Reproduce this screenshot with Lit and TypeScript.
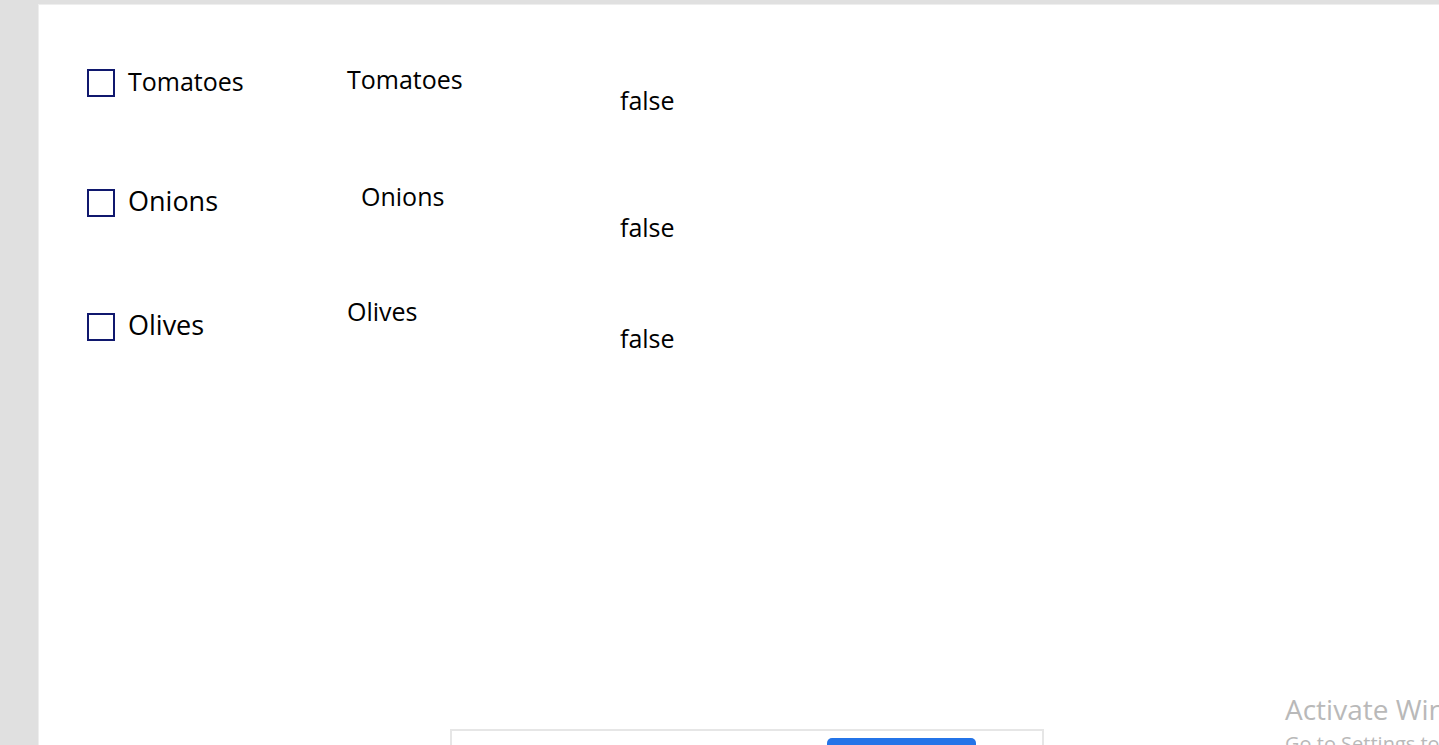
import { LitElement, html, css } from "lit";
import { customElement, state } from "lit/decorators.js";

@customElement("app-root")
class AppRoot extends LitElement {
  static styles = css`
    :host {
      display: block;
      color: #000;
      font-family: "Open Sans", "Noto Sans", sans-serif;
    }
    .workspace {
      box-sizing: border-box;
      position: relative;
      height: 100vh;
      overflow: hidden;
      padding: 4px 0 0 38px;
      background: #e0e0e0;
    }
    .screen {
      box-sizing: border-box;
      display: flex;
      align-items: flex-start;
      height: 100%;
      padding-left: 48px;
      border: solid #eee;
      border-width: 1px 0 0 1px;
      background: #fff;
    }
    .column {
      display: grid;
      line-height: 36px;
      font-size: 25px;
    }
    .choices {
      width: 260px;
      padding-top: 60px;
      grid-template-rows: 120px 124px 36px;
      font-size: 27px;
    }
    .names {
      width: 273px;
      padding-top: 56px;
      grid-template-rows: 117px 115px 36px;
    }
    .values {
      padding-top: 77px;
      grid-template-rows: 127px 111px 36px;
    }
    .small {
      font-size: 25px;
    }
    .indent {
      padding-left: 14px;
    }
    .choice {
      display: flex;
      align-items: center;
      gap: 13px;
      height: 36px;
    }
    .caption {
      padding-bottom: 4px;
    }
    .box {
      appearance: none;
      box-sizing: border-box;
      width: 28px;
      height: 28px;
      margin: 0;
      border: 2px solid #10186e;
      background: #fff;
    }
    .box:checked {
      box-shadow: inset 0 0 0 5px #fff;
      background: #10186e;
    }
    .sharing {
      position: absolute;
      left: 450px;
      right: 395px;
      bottom: 0;
      box-sizing: border-box;
      display: flex;
      justify-content: flex-end;
      height: 16px;
      padding: 7px 66px 0 0;
      border: 2px solid #e6e6e6;
      border-bottom: 0;
      background: #fff;
      overflow: hidden;
    }
    .stop {
      flex: none;
      width: 149px;
      height: 32px;
      padding: 0;
      border: 0;
      border-radius: 5px;
      background: #2374e8;
    }
    .watermark {
      position: absolute;
      left: calc(100% - 154px);
      bottom: -16px;
      color: #b9b9b9;
      white-space: nowrap;
    }
    .title {
      font-size: 28px;
      line-height: 36px;
    }
    .hint {
      font-size: 20px;
      line-height: 34px;
    }
  `;

  @state() private checked = [false, false, false];

  private toggle(index: number, event: Event) {
    const on = (event.target as HTMLInputElement).checked;
    this.checked = this.checked.map((value, i) => (i === index ? on : value));
  }

  render() {
    const names = ["Tomatoes", "Onions", "Olives"];
    return html`
      <main class="workspace">
        <section class="screen">
          <div class="column choices">
            ${names.map(
              (name, i) => html`<label class="choice ${i === 0 ? "small" : ""}"
                ><input
                  class="box"
                  type="checkbox"
                  .checked=${this.checked[i]}
                  @change=${(e: Event) => this.toggle(i, e)}
                /><span class="caption">${name}</span></label
              >`
            )}
          </div>
          <div class="column names">
            <span>Tomatoes</span>
            <span class="indent">Onions</span>
            <span>Olives</span>
          </div>
          <div class="column values">
            ${this.checked.map((value) => html`<output>${value}</output>`)}
          </div>
        </section>
        <div class="sharing"><button class="stop" type="button"></button></div>
        <aside class="watermark">
          <div class="title">Activate Windows</div>
          <div class="hint">Go to Settings to activate Windows.</div>
        </aside>
      </main>
    `;
  }
}
